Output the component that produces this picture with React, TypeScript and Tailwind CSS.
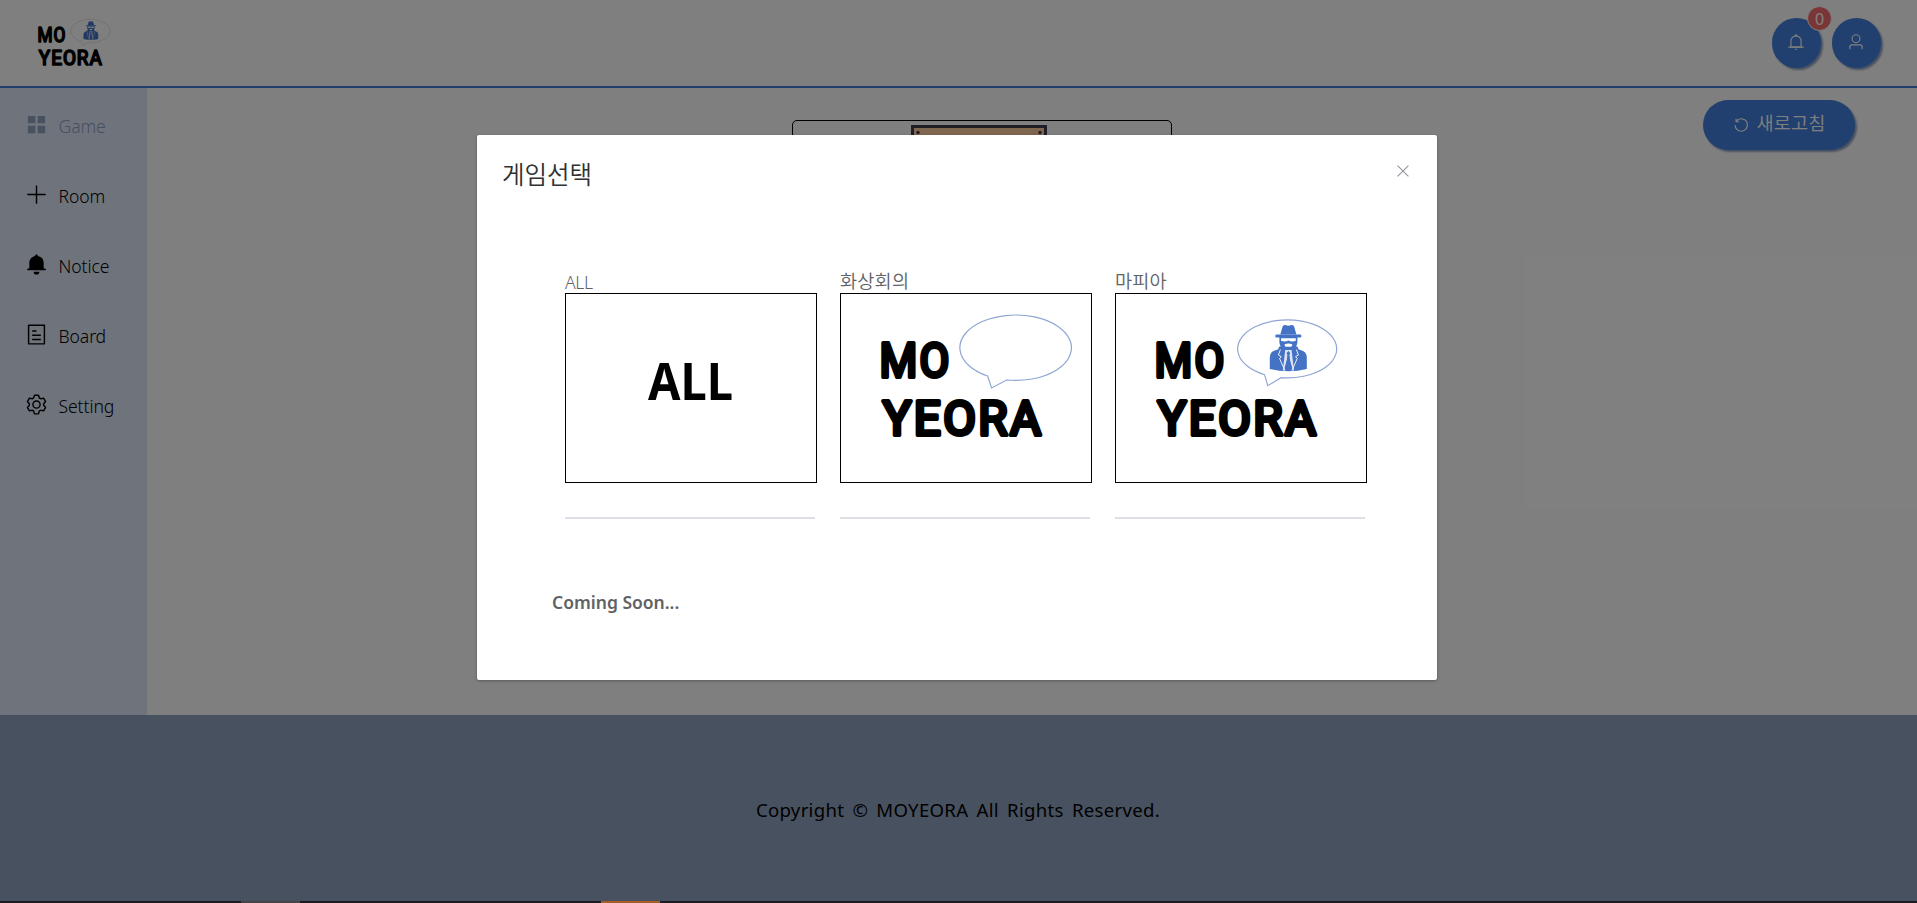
import type { ReactNode } from "react";

const KO = "font-['Noto_Sans','Noto_Sans_CJK_KR',sans-serif]";

const paths = {
  bell: [
    "M512 64a64 64 0 0 1 64 64v64H448v-64a64 64 0 0 1 64-64z",
    "M256 768h512V448a256 256 0 1 0-512 0v320zm256-640a320 320 0 0 1 320 320v384H192V448a320 320 0 0 1 320-320z",
    "M96 768h832q32 0 32 32t-32 32H96q-32 0-32-32t32-32zm352 128h128a64 64 0 0 1-128 0z",
  ],
  user: [
    "M512 512a192 192 0 1 0 0-384 192 192 0 0 0 0 384zm0 64a256 256 0 1 1 0-512 256 256 0 0 1 0 512zm320 320v-96a96 96 0 0 0-96-96H288a96 96 0 0 0-96 96v96a32 32 0 1 1-64 0v-96a160 160 0 0 1 160-160h448a160 160 0 0 1 160 160v96a32 32 0 1 1-64 0z",
  ],
  refresh: [
    "M289.088 296.704h92.992a32 32 0 0 1 0 64H232.96a32 32 0 0 1-32-32V179.712a32 32 0 0 1 64 0v50.56a384 384 0 0 1 643.84 282.88 384 384 0 0 1-383.936 384 384 384 0 0 1-384-384h64a320 320 0 1 0 640 0 320 320 0 0 0-555.712-216.448z",
  ],
  menu: ["M128 128h332v332H128zM564 128h332v332H564zM128 564h332v332H128zM564 564h332v332H564z"],
  plus: [
    "M480 480V128a32 32 0 0 1 64 0v352h352a32 32 0 1 1 0 64H544v352a32 32 0 1 1-64 0V544H128a32 32 0 0 1 0-64h352z",
  ],
  bellFilled: [
    "M640 832a128 128 0 0 1-256 0h256zm192-64H134.4a38.4 38.4 0 0 1 0-76.8H192V448c0-154.88 110.08-284.16 256.32-313.6a64 64 0 1 1 127.36 0A320.128 320.128 0 0 1 832 448v243.2h57.6a38.4 38.4 0 0 1 0 76.8H832z",
  ],
  tickets: [
    "M192 128v768h640V128H192zm-32-64h704a32 32 0 0 1 32 32v832a32 32 0 0 1-32 32H160a32 32 0 0 1-32-32V96a32 32 0 0 1 32-32zm160 448h384v64H320v-64zm0-192h192v64H320v-64zm0 384h384v64H320v-64z",
  ],
  setting: [
    "M600.704 64a32 32 0 0 1 30.464 22.208l35.2 109.376c14.784 7.232 28.928 15.36 42.432 24.512l112.384-24.192a32 32 0 0 1 34.432 15.36L944.32 364.8a32 32 0 0 1-4.032 37.504l-77.12 85.12a357.12 357.12 0 0 1 0 49.024l77.12 85.248a32 32 0 0 1 4.032 37.504l-88.704 153.6a32 32 0 0 1-34.432 15.296L708.8 803.904c-13.44 9.088-27.648 17.28-42.368 24.512l-35.264 109.376A32 32 0 0 1 600.704 960H423.296a32 32 0 0 1-30.464-22.208L357.696 828.48a351.616 351.616 0 0 1-42.56-24.64l-112.32 24.256a32 32 0 0 1-34.432-15.36L79.68 659.2a32 32 0 0 1 4.032-37.504l77.12-85.248a357.12 357.12 0 0 1 0-48.896l-77.12-85.248A32 32 0 0 1 79.68 364.8l88.704-153.6a32 32 0 0 1 34.432-15.296l112.32 24.256c13.568-9.152 27.776-17.408 42.56-24.64l35.2-109.312A32 32 0 0 1 423.232 64H600.64zm-23.424 64H446.72l-36.352 113.088-24.512 11.968a294.113 294.113 0 0 0-34.816 20.096l-22.656 15.36-116.224-25.088-65.28 113.152 79.68 88.192-1.92 27.136a293.12 293.12 0 0 0 0 40.192l1.92 27.136-79.808 88.192 65.344 113.152 116.224-25.024 22.656 15.296a294.113 294.113 0 0 0 34.816 20.096l24.512 11.968L446.72 896h130.688l36.48-113.152 24.448-11.904a288.282 288.282 0 0 0 34.752-20.096l22.592-15.296 116.288 25.024 65.28-113.152-79.744-88.192 1.92-27.136a293.12 293.12 0 0 0 0-40.256l-1.92-27.136 79.808-88.128-65.344-113.152-116.288 24.96-22.592-15.232a287.616 287.616 0 0 0-34.752-20.096l-24.448-11.904L577.344 128zM512 320a192 192 0 1 1 0 384 192 192 0 0 1 0-384zm0 64a128 128 0 1 0 0 256 128 128 0 0 0 0-256z",
  ],
};

function Icon({ name, className }: { name: keyof typeof paths; className: string }) {
  return (
    <svg viewBox="0 0 1024 1024" fill="currentColor" className={className}>
      {paths[name].map((d) => (
        <path key={d} d={d} />
      ))}
    </svg>
  );
}

function Detective() {
  return (
    <g>
      <g fill="#4472c4">
        <path d="M163.5 40.5 L165.8 32.5 Q166.5 30.6 168.5 31 Q171.5 32.4 174.5 31 Q176.6 30.6 177.3 32.5 L179.6 40.5 Z" />
        <rect x="158.6" y="40.6" width="25.9" height="2.8" rx="1.2" />
        <path d="M162.6 43 h18 v5.5 q-0.6 5 -5 6.5 h-8 q-4.4 -1.5 -5 -6.5 Z" />
        <path d="M153 75 V63 Q153.4 58 158 56.6 L161.5 55.2 L162 53 L165 51.8 H178 L181 53 L181.6 55.2 L185 56.6 Q189.7 58 190 63 V75 Q172 79.5 153 75 Z" />
      </g>
      <g fill="#fff">
        <path d="M164.2 44.2 h14.8 v2.6 q-3.7 1.6 -7.4 -0.2 q-3.7 1.8 -7.4 0.2 Z" />
        <path d="M167.4 50.8 q4.2 -2.4 8.4 0 l-1.4 1.9 h-5.6 Z" />
        <path d="M168.4 56 h6.4 l2.4 20.4 h-1 l-3.2 -11 l-1.4 -7.4 l-1.4 7.4 l-3.2 11 h-1 Z" opacity="0.8" />
      </g>
      <path d="M171.6 57 l1.8 2 l-.8 2 l1.4 14 l-2.4 2 l-2.4 -2 l1.4 -14 l-.8 -2 Z" fill="#4472c4" />
      <g fill="none" stroke="#fff" strokeWidth="0.9">
        <path d="M163.6 55.6 L161.6 61 L164.4 62.6 L162.8 64.6 L168.2 76.8" />
        <path d="M179.6 55.6 L181.6 61 L178.8 62.6 L180.4 64.6 L175 76.8" />
      </g>
    </g>
  );
}

function Logo({ mafia, outline, className }: { mafia?: boolean; outline: string; className: string }) {
  return (
    <svg viewBox="0 0 250 188" className={className}>
      <g
        fill="#000"
        stroke="#000"
        strokeWidth="4.2"
        strokeLinejoin="round"
        className="font-['Roboto',sans-serif] text-[48.5px] font-normal tracking-[2.5px]"
      >
        <text x="38.6" y="83.4" textLength="72" lengthAdjust="spacingAndGlyphs">MO</text>
        <text x="41.8" y="141.4" textLength="160.5" lengthAdjust="spacingAndGlyphs">YEORA</text>
      </g>
      {mafia ? (
        <g transform="translate(0.8 0)">
          <path
            d="M147.7 80.7 A49.5 29 0 1 1 164.3 83.7 L151 91.7 Z"
            fill="none"
            stroke={outline}
            strokeWidth="1.2"
          />
          <Detective />
        </g>
      ) : (
        <path
          d="M146.6 82 A55.8 32.7 0 1 1 165.6 86 L150.6 94 Z"
          fill="none"
          stroke={outline}
          strokeWidth="1.2"
        />
      )}
    </svg>
  );
}

const nav: { icon: keyof typeof paths; label: string; active?: boolean }[] = [
  { icon: "menu", label: "Game", active: true },
  { icon: "plus", label: "Room" },
  { icon: "bellFilled", label: "Notice" },
  { icon: "tickets", label: "Board" },
  { icon: "setting", label: "Setting" },
];

function Round({ children }: { children: ReactNode }) {
  return (
    <button className="relative flex h-[50px] w-[49px] items-center justify-center rounded-full bg-[#4480de] pb-[2px] text-white shadow-[2px_2px_2px_#8fa2c0]">
      {children}
    </button>
  );
}

function GameOption({ label, tight, children }: { label: string; tight?: boolean; children: ReactNode }) {
  return (
    <div className="w-[250px]">
      <div
        className={`flex h-[28px] items-center text-[#606266] ${tight ? "pt-[6px] text-[17.5px] font-[350] tracking-[-0.3px]" : "pt-[4px] text-[18.6px] font-[350] tracking-[0.2px]"}`}
      >
        {label}
      </div>
      <div className="h-[190px] w-[252px] border border-black bg-white">{children}</div>
      <div className="mt-[34px] h-[2px] bg-[#dcdfe6]" />
    </div>
  );
}

export default function App() {
  return (
    <div className={`relative flex h-[903px] w-full flex-col overflow-hidden bg-white ${KO}`}>
      <header className="flex h-[88px] shrink-0 items-start justify-between border-b-2 border-[#4480de] pl-[22px] pr-[36px]">
        <Logo mafia outline="#c2c7d2" className="mt-[9px] h-[75px] w-[100px]" />
        <div className="mt-[18px] flex gap-[11px]">
          <Round>
            <Icon name="bell" className="mr-px size-[18px]" />
            <span className="absolute -right-[11px] -top-[12px] flex size-[25px] items-center justify-center rounded-full border border-white bg-[#f56c6c] text-[16px]">
              0
            </span>
          </Round>
          <Round>
            <Icon name="user" className="mr-px size-[18px]" />
          </Round>
        </div>
      </header>

      <div className="flex min-h-0 flex-1">
        <nav className="flex w-[147px] flex-col bg-[#dee8f8] pt-[2px]">
          {nav.map((n) => (
            <a
              key={n.label}
              className={`flex h-[70px] items-center gap-[10.5px] pl-[25px] text-[17.6px] font-[350] tracking-[-0.1px] ${n.active ? "text-[#90a2c0]" : "text-black"}`}
            >
              <Icon name={n.icon} className="-mt-[1px] size-[23px]" />
              <span className="mt-[3px]">{n.label}</span>
            </a>
          ))}
        </nav>
        <main className="grid flex-1 grid-cols-[645px_380px_1fr] items-start">
          <div />
          <div className="mt-[32px] flex h-[300px] justify-center rounded-[5px] border border-black pr-[6px] pt-[4px]">
            <svg viewBox="0 0 136 136" className="size-[136px]">
              <rect x="1.5" y="1.5" width="133" height="133" fill="#ffcc9e" stroke="#3c3c4c" strokeWidth="3" />
              <circle cx="7" cy="7.5" r="1.7" fill="#3c3c4c" />
              <circle cx="129" cy="7.5" r="1.7" fill="#3c3c4c" />
            </svg>
          </div>
          <div className="flex justify-end pr-[62px] pt-[12px]">
            <button className="flex h-[50px] w-[152px] items-center justify-center gap-[6px] rounded-full bg-[#4480de] pb-[4px] text-[18.6px] font-[350] tracking-[0.2px] text-white shadow-[2px_2px_2px_#8fa2c0]">
              <Icon name="refresh" className="mt-[3px] size-[18px]" />
              새로고침
            </button>
          </div>
        </main>
      </div>

      <footer className="flex h-[186px] shrink-0 items-center justify-center bg-[#90a2be] pr-[1px] pt-[4px] text-[18.6px] tracking-[0.3px] [word-spacing:3px]">
        Copyright © MOYEORA All Rights Reserved.
      </footer>
      <div className="flex h-[2px] shrink-0 bg-[#3a3640]">
        <div className="ml-[241px] w-[59px] bg-[#908a90]" />
      </div>

      <div className="absolute inset-0 bg-black/50" />
      <div className="absolute bottom-0 left-[601px] h-[2px] w-[59px] bg-[#a85e22]" />

      <section
        role="dialog"
        className="absolute left-[477px] top-[135px] flex h-[545px] w-[960px] flex-col rounded-[2px] bg-white shadow-[0_1px_3px_rgba(0,0,0,0.3)]"
      >
        <div className="flex items-start justify-between pl-[25px] pr-[28px] pt-[20px]">
          <h2 className="h-[40px] text-[24.5px] font-[350] leading-[40px] text-[#303133]">게임선택</h2>
          <svg viewBox="0 0 12 12" className="mt-[10px] size-[12px]" fill="none" stroke="#909399" strokeWidth="1.1">
            <path d="M.6.6l10.8 10.8M11.4.6L.6 11.4" />
          </svg>
        </div>
        <div className="flex gap-[25px] pl-[88px] pt-[70px]">
          <GameOption label="ALL" tight>
            <svg viewBox="0 0 250 188" className="h-[188px] w-[250px]">
              <text
                x="82"
                y="105.8"
                textLength="85"
                lengthAdjust="spacingAndGlyphs"
                className="font-['Noto_Sans',sans-serif] text-[52px] font-bold"
              >
                ALL
              </text>
            </svg>
          </GameOption>
          <GameOption label="화상회의">
            <Logo outline="#8fa6d2" className="h-[188px] w-[250px]" />
          </GameOption>
          <GameOption label="마피아">
            <Logo mafia outline="#8fa6d2" className="h-[188px] w-[250px]" />
          </GameOption>
        </div>
        <p className="pl-[75px] pt-[70px] text-[17.5px] font-semibold text-[#606266]">Coming Soon...</p>
      </section>
    </div>
  );
}
